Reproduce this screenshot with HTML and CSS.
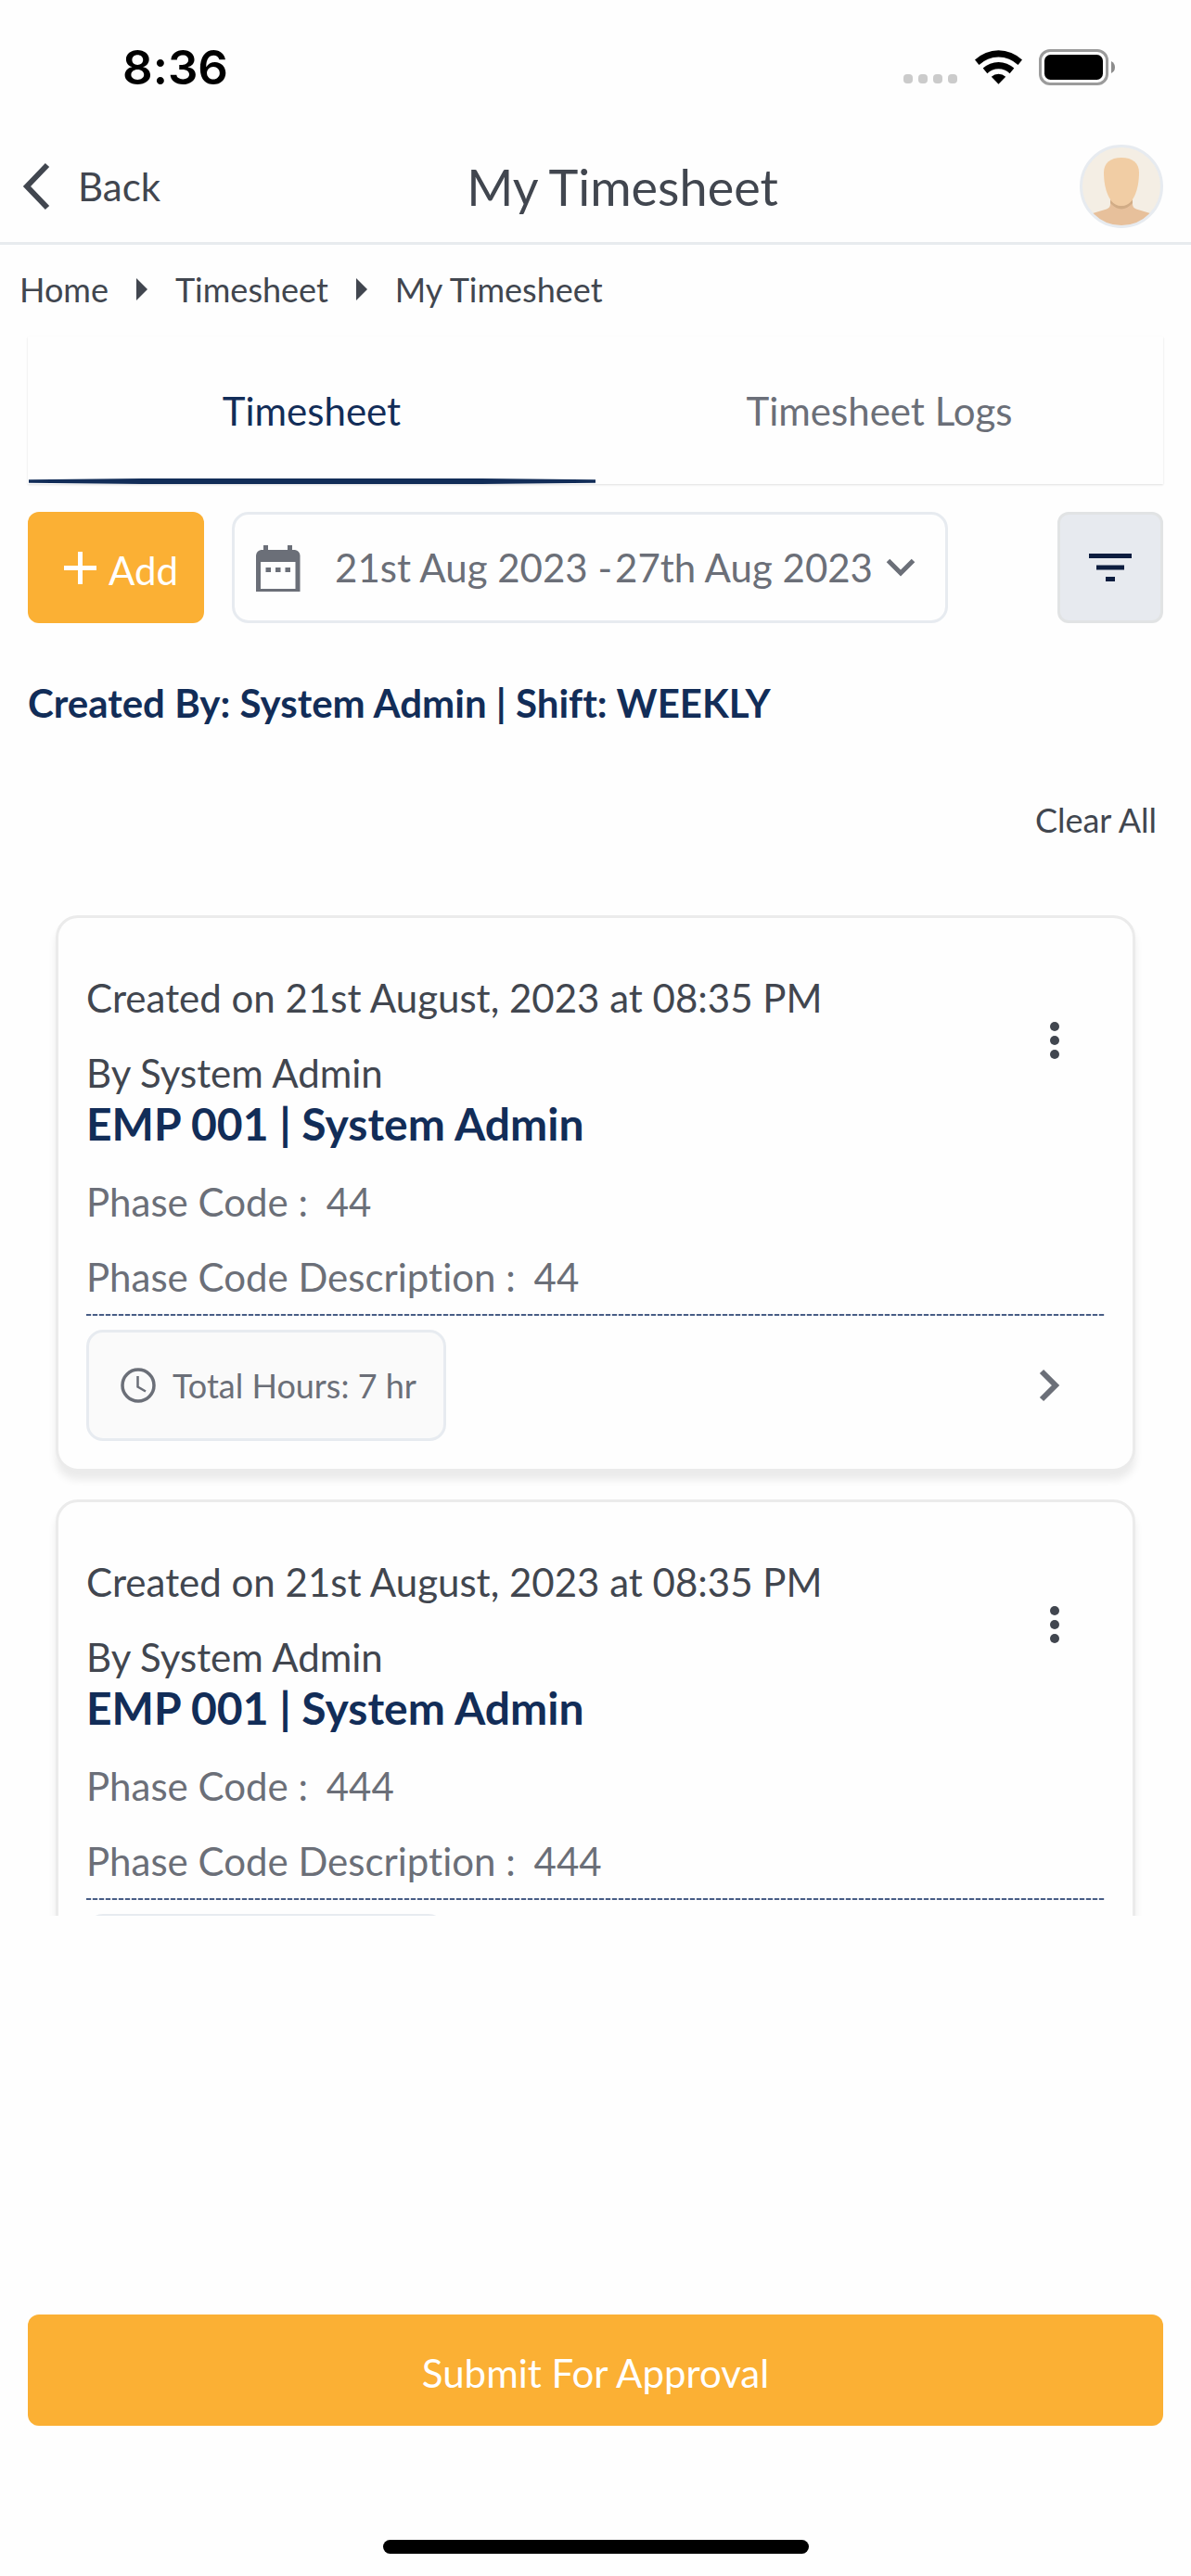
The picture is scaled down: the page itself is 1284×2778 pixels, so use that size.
FILE: index.html
```html
<!DOCTYPE html>
<html lang="en">
<head>
    <meta charset="UTF-8">
    <meta name="viewport" content="width=device-width, initial-scale=1.0">
    <title>My Timesheet</title>
    <link rel="stylesheet" href="styles.css">
</head>
<body>
    <div class="status-bar">
        <span class="time">8:36</span>
        <div class="status-icons">
            <svg class="signal" width="58" height="12" viewBox="0 0 58 12" fill="#cbcbcb">
                <rect x="0" y="0" width="10" height="10" rx="4"/>
                <rect x="16" y="0" width="10" height="10" rx="4"/>
                <rect x="32" y="0" width="10" height="10" rx="4"/>
                <rect x="48" y="0" width="10" height="10" rx="4"/>
            </svg>
            <svg width="51" height="37" viewBox="0 0 51 37">
                <path d="M0 10.5 A37 37 0 0 1 51 10.5 L46.5 16 A30 30 0 0 0 4.5 16 Z"/>
                <path d="M8.7 19.6 A24.5 24.5 0 0 1 42.3 19.6 L37.6 25.2 A17.5 17.5 0 0 0 13.4 25.2 Z"/>
                <path d="M17.8 28.8 A11.5 11.5 0 0 1 33.2 28.8 L25.5 36.7 Z"/>
            </svg>
            <svg width="83" height="39" viewBox="0 0 83 39">
                <rect x="1.5" y="1.5" width="72" height="36" rx="10.5" fill="none" stroke="#9b9b9b" stroke-width="3"/>
                <rect x="6" y="6" width="63" height="27" rx="6.5"/>
                <path d="M78 13 Q82 15 82 19.5 Q82 24 78 26 Z" fill="#8c8c8c"/>
            </svg>
        </div>
    </div>

    <header class="header">
        <button type="button" class="back">
            <svg width="30" height="52" viewBox="0 0 30 52" fill="none" stroke="#41464f" stroke-width="6">
                <path d="M27 3 L5 26 L27 49"/>
            </svg>
            Back
        </button>
        <h1>My Timesheet</h1>
        <button type="button" class="avatar" aria-label="Profile">
            <svg width="90" height="90" viewBox="0 0 90 90">
                <clipPath id="face"><circle cx="45" cy="45" r="43"/></clipPath>
                <g clip-path="url(#face)">
                    <rect width="90" height="90" fill="#f4eee4"/>
                    <path d="M33 58 V64 Q33 68 29 69.5 L14 74 V90 H76 V74 L61 69.5 Q57 68 57 64 V58 Z" fill="#e7c09b"/>
                    <path d="M33 60 Q39 66 45 66 Q51 66 57 60 V63 Q51 69.5 45 69.5 Q39 69.5 33 63 Z" fill="#d1ac86"/>
                    <path d="M26 30 C26 20 33 14 45 14 C57 14 64 20 64 30 C64 48 58 66 45 66 C32 66 26 48 26 30 Z" fill="#f1cda4"/>
                </g>
                <circle cx="45" cy="45" r="43.5" fill="none" stroke="#e7ebf0" stroke-width="3"/>
            </svg>
        </button>
    </header>

    <nav class="breadcrumb">
        <a href="#">Home</a>
        <svg width="12" height="24" viewBox="0 0 12 24" fill="#41464f"><path d="M0 0 L12 12 L0 24 Z"/></svg>
        <a href="#">Timesheet</a>
        <svg width="12" height="24" viewBox="0 0 12 24" fill="#41464f"><path d="M0 0 L12 12 L0 24 Z"/></svg>
        <a href="#">My Timesheet</a>
    </nav>

    <div class="tabs">
        <button type="button" class="tab active">Timesheet</button>
        <button type="button" class="tab">Timesheet Logs</button>
    </div>

    <div class="toolbar">
        <button type="button" class="add-btn">
            <svg width="60" height="57" viewBox="0 0 60 57" stroke="#fff" stroke-width="5"><path d="M12 28.5 H47 M29.5 11 V46"/></svg>
            Add
        </button>
        <button type="button" class="date-range">
            <svg width="48" height="52" viewBox="0 -1 48 52" fill="#6b6f78">
                <path d="M8 1 H13 V6 H34 V1 H39 V6 H42 Q47 7 47.5 12 V51 H0 V12 Q0.5 7 5.5 6 H8 Z M5 19 V48 H42.5 V19 Z" fill-rule="evenodd"/>
                <path d="M10.5 25 h5.5 v5 h-5.5 Z M21 25 h5.5 v5 h-5.5 Z M31.5 25 h5.5 v5 h-5.5 Z"/>
            </svg>
            <span class="dates">21st Aug 2023 <span class="dash">-</span>27th Aug 2023</span>
            <svg width="32" height="20" viewBox="0 0 32 20" fill="none" stroke="#6b6f78" stroke-width="5"><path d="M2.5 2.5 L16 16 L29.5 2.5"/></svg>
        </button>
        <button type="button" class="filter-btn" aria-label="Filter">
            <svg width="46" height="30" viewBox="0 0 46 30" fill="#0c1d3f">
                <rect x="0" y="0" width="46" height="5"/>
                <rect x="8" y="12.5" width="30" height="5"/>
                <rect x="18" y="25" width="10" height="5"/>
            </svg>
        </button>
    </div>

    <h2 class="summary">Created By: System Admin | Shift: WEEKLY</h2>
    <button type="button" class="clear-all">Clear All</button>

    <main class="list">
        <article class="card">
            <div class="card-head">
                <div>
                    <p>Created on 21st August, 2023 at 08:35 PM</p>
                    <p>By System Admin</p>
                </div>
                <button type="button" class="icon-btn" aria-label="More">
                    <svg width="12" height="42" viewBox="0 0 12 42" fill="#41464f"><circle cx="6" cy="6" r="5"/><circle cx="6" cy="21" r="5"/><circle cx="6" cy="36" r="5"/></svg>
                </button>
            </div>
            <h3>EMP 001 | System Admin</h3>
            <p class="phase">Phase Code : <span>44</span></p>
            <p class="phase">Phase Code Description : <span>44</span></p>
            <hr class="divider">
            <div class="card-foot">
                <div class="hours">
                    <svg width="38" height="38" viewBox="0 0 38 38" fill="none" stroke="#6b6f78" stroke-width="3.5"><circle cx="19" cy="19" r="17"/><path d="M18.5 9 V20.5 L27 25.5" stroke-width="2.5"/></svg>
                    Total Hours: 7 hr
                </div>
                <button type="button" class="icon-btn open" aria-label="Open">
                    <svg width="24" height="36" viewBox="0 0 24 36" fill="none" stroke="#6b6f78" stroke-width="6"><path d="M3 3 L18 18 L3 33"/></svg>
                </button>
            </div>
        </article>

        <article class="card">
            <div class="card-head">
                <div>
                    <p>Created on 21st August, 2023 at 08:35 PM</p>
                    <p>By System Admin</p>
                </div>
                <button type="button" class="icon-btn" aria-label="More">
                    <svg width="12" height="42" viewBox="0 0 12 42" fill="#41464f"><circle cx="6" cy="6" r="5"/><circle cx="6" cy="21" r="5"/><circle cx="6" cy="36" r="5"/></svg>
                </button>
            </div>
            <h3>EMP 001 | System Admin</h3>
            <p class="phase">Phase Code : <span>444</span></p>
            <p class="phase">Phase Code Description : <span>444</span></p>
            <hr class="divider">
            <div class="card-foot">
                <div class="hours"></div>
            </div>
        </article>
    </main>

    <footer class="footer">
        <button type="button" class="submit-btn">Submit For Approval</button>
        <div class="home-bar"></div>
    </footer>
</body>
</html>
```

FILE: styles.css
```css
* {
    box-sizing: border-box;
}
body {
    margin: 0;
    height: 100vh;
    display: flex;
    flex-direction: column;
    background-color: #fefefe;
    color: #41464f;
    font-family: Lato, sans-serif;
    font-size: 42px;
    line-height: 51px;
    font-variant-ligatures: none;
}
h1, h2, h3, p {
    margin: 0;
    font-weight: normal;
}
button {
    margin: 0;
    padding: 0;
    border: none;
    background: none;
    color: inherit;
    font: inherit;
    cursor: pointer;
}
svg {
    display: block;
    flex-shrink: 0;
}
a {
    color: inherit;
    text-decoration: none;
}

/* status bar */
.status-bar {
    display: flex;
    justify-content: space-between;
    align-items: center;
    height: 141px;
    padding: 4px 81px 0 132px;
    color: #000;
}
.time {
    font-family: Inter, sans-serif;
    font-size: 51px;
    font-weight: 600;
}
.status-icons {
    display: flex;
    align-items: center;
    gap: 18px;
}
.signal {
    align-self: flex-end;
    margin-right: 1px;
}

/* header */
.header {
    display: flex;
    justify-content: space-between;
    align-items: center;
    padding: 15px 30px 15px 24px;
    border-bottom: 3px solid #e7ebee;
}
.header h1 {
    font-size: 54px;
    line-height: 65px;
}
.back {
    display: flex;
    align-items: center;
    gap: 30px;
    padding-right: 5px;
}
.avatar {
    border-radius: 50%;
}
.breadcrumb {
    display: flex;
    align-items: center;
    gap: 30px;
    padding: 26px 21px 29px;
    font-size: 36px;
    line-height: 44px;
}

/* tabs */
.tabs {
    display: flex;
    margin: 0 30px;
    box-shadow: 0 1px 2px rgba(0, 0, 0, 0.12);
}
.tab {
    flex: 1;
    padding: 55px 0 53px;
    color: #6b6f78;
    position: relative;
}
.tab.active {
    color: #122d58;
}
.tab.active::after {
    content: "";
    position: absolute;
    left: 1px;
    right: 0;
    bottom: 0;
    height: 6px;
    background-color: #122d58;
    clip-path: polygon(0 20%, 20% 0, 80% 0, 100% 20%, 100% 80%, 80% 100%, 20% 100%, 0 80%);
}

/* toolbar */
.toolbar {
    display: flex;
    gap: 30px;
    margin: 30px 30px 0;
    height: 120px;
}
.add-btn {
    display: flex;
    align-items: flex-end;
    padding: 32px 28px 31px 27px;
    border-radius: 12px;
    background-color: #fbb034;
    color: #fff;
}
.date-range {
    display: flex;
    align-items: center;
    padding: 0 32px 0 23px;
    border: 3px solid #e7ebf0;
    border-radius: 18px;
    color: #6b6f78;
}
.dates {
    margin: 0 14px 0 37px;
}
.dash {
    margin-right: 3px;
}
.filter-btn {
    display: flex;
    align-items: center;
    justify-content: center;
    width: 114px;
    margin-left: auto;
    border: 3px solid #e1e3e4;
    border-radius: 12px;
    background-color: #e7eaef;
}
.summary {
    margin: 61px 30px 0;
    color: #122d58;
    font-size: 42px;
    font-weight: bold;
}
.clear-all {
    align-self: flex-end;
    margin: 78px 37px 0;
    font-size: 36px;
    line-height: 44px;
}

/* timesheet cards */
.list {
    flex: 1;
    min-height: 0;
    overflow: hidden;
    margin-top: 51px;
    padding: 30px 60px 0;
}
.card {
    margin-bottom: 30px;
    padding: 31px 30px 30px;
    border: 3px solid #ebebeb;
    border-radius: 24px;
    background-color: #fefefe;
    box-shadow: 0 9px 9px rgba(0, 0, 0, 0.08);
}
.card-head {
    display: flex;
    justify-content: space-between;
    align-items: center;
}
.card-head p, .phase {
    margin-top: 30px;
}
.icon-btn {
    display: flex;
    justify-content: center;
    width: 108px;
    margin-top: 40px;
}
.icon-btn.open {
    width: 118px;
    margin-top: 0;
}
.card h3 {
    color: #122d58;
    font-size: 48px;
    line-height: 58px;
    font-weight: bold;
}
.phase {
    color: #6b6f78;
}
.phase span {
    margin-left: 9px;
}
.divider {
    height: 2px;
    margin: 14px 0 15px;
    border: none;
    background: repeating-linear-gradient(90deg, #485d85 0 5px, #dfe3ea 5px 7px);
}
.card-foot {
    display: flex;
    justify-content: space-between;
    align-items: center;
}
.hours {
    display: flex;
    align-items: center;
    gap: 18px;
    min-width: 387px;
    height: 120px;
    padding: 0 29px 0 34px;
    border: 3px solid #e7ebf0;
    border-radius: 18px;
    background-color: #fafafa;
    color: #6b6f78;
    font-size: 36px;
    line-height: 44px;
}

/* footer */
.footer {
    padding: 430px 30px 24px;
}
.submit-btn {
    width: 100%;
    height: 120px;
    padding-top: 6px;
    border-radius: 12px;
    background-color: #fbb034;
    color: #fff;
}
.home-bar {
    width: 37.5%;
    height: 15px;
    margin: 123px auto 0;
    border-radius: 8px;
    background-color: #000;
}
```
